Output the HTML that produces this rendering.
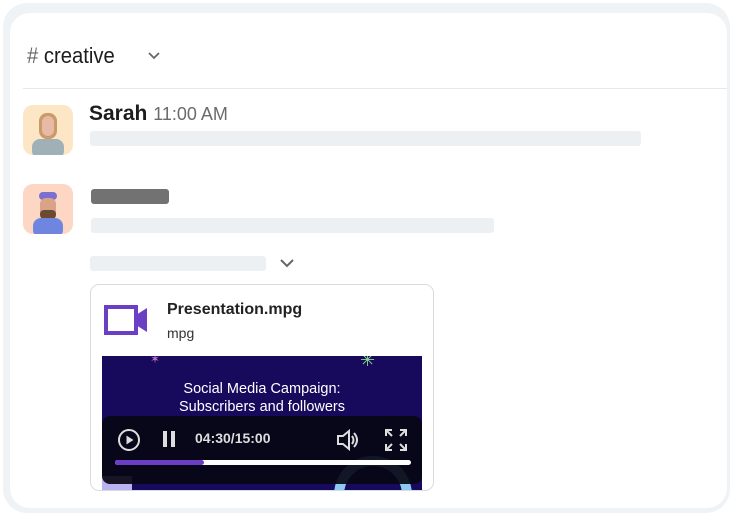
<!DOCTYPE html>
<html><head><style>
*{margin:0;padding:0;box-sizing:border-box}
body{width:732px;height:516px;background:#fff;font-family:"Liberation Sans",sans-serif;position:relative;overflow:hidden}
.outer{position:absolute;left:3px;top:3px;width:727px;height:510px;border-radius:24px;background:#f0f3f6}
.inner{position:absolute;left:10px;top:13px;width:717px;height:495px;border-radius:20px;background:#fff;overflow:hidden}
.bar{position:absolute;background:#edf0f3;border-radius:3px}
</style></head><body>
<div class="outer"></div>
<div class="inner">
 <div style="position:absolute;left:17px;top:30px;font-size:22px;color:#1d1d1d;transform:scaleX(0.92);transform-origin:left"><span style="color:#666">#</span> creative</div>
 <svg style="position:absolute;left:137px;top:38px" width="14" height="10" viewBox="0 0 14 10"><path d="M2 2l5 5 5-5" stroke="#666" stroke-width="1.8" fill="none"/></svg>
 <div style="position:absolute;left:13px;top:75px;width:710px;height:1px;background:#e6e8ea"></div>
</div>
<div style="position:absolute;left:23px;top:105px;width:50px;height:50px;border-radius:10px;background:#fde6c6;overflow:hidden">
 <div style="position:absolute;left:16px;top:8px;width:18px;height:26px;border-radius:8px;background:#c99a6a"></div>
 <div style="position:absolute;left:19px;top:11px;width:12px;height:20px;border-radius:6px;background:#e8b9a4"></div>
 <div style="position:absolute;left:9px;top:34px;width:32px;height:20px;border-radius:8px;background:#9fb0b6"></div>
</div>
<div style="position:absolute;left:23px;top:184px;width:50px;height:50px;border-radius:10px;background:#fdd6c4;overflow:hidden">
 <div style="position:absolute;left:16px;top:8px;width:18px;height:8px;border-radius:5px;background:#7b6fd0"></div>
 <div style="position:absolute;left:17px;top:14px;width:16px;height:20px;border-radius:6px;background:#d9a38a"></div>
 <div style="position:absolute;left:17px;top:26px;width:16px;height:9px;border-radius:4px;background:#6b4a32"></div>
 <div style="position:absolute;left:10px;top:34px;width:30px;height:20px;border-radius:8px;background:#6e86e0"></div>
</div>
<div style="position:absolute;left:89px;top:102px;font-size:21px;font-weight:bold;color:#1d1d1d">Sarah <span style="font-weight:normal;font-size:18px;color:#6b6b6b">11:00 AM</span></div>
<div class="bar" style="left:90px;top:131px;width:551px;height:15px"></div>
<div style="position:absolute;left:91px;top:189px;width:78px;height:15px;background:#727272;border-radius:3px"></div>
<div class="bar" style="left:91px;top:218px;width:403px;height:15px"></div>
<div class="bar" style="left:90px;top:256px;width:176px;height:15px"></div>
<svg style="position:absolute;left:279px;top:258px" width="16" height="11" viewBox="0 0 16 11"><path d="M2 2l6 6 6-6" stroke="#666" stroke-width="2" fill="none"/></svg>
<div style="position:absolute;left:90px;top:284px;width:344px;height:207px;border:1.5px solid #d5dde3;border-radius:9px;background:#fff;overflow:hidden">
 <svg style="position:absolute;left:13px;top:20px" width="46" height="30" viewBox="0 0 46 30"><rect x="2" y="2" width="30" height="26" fill="none" stroke="#6a3fc4" stroke-width="4"/><path d="M32 10l11-7v24l-11-7z" fill="#6a3fc4"/></svg>
 <div style="position:absolute;left:76px;top:16px;font-size:16px;font-weight:bold;color:#222">Presentation.mpg</div>
 <div style="position:absolute;left:76px;top:40px;font-size:14px;color:#333">mpg</div>
 <div style="position:absolute;left:11px;top:71px;width:320px;height:136px;background:#170a5c;overflow:hidden">
  <div style="position:absolute;left:0;top:24px;width:320px;text-align:center;font-size:14.5px;line-height:18px;color:#fff">Social Media Campaign:<br>Subscribers and followers</div>
  <div style="position:absolute;left:48px;top:-4px;font-size:12px;color:#c070c0">✶</div>
  <div style="position:absolute;left:258px;top:-6px;font-size:18px;color:#8cd98c">✳</div>
  <div style="position:absolute;left:232px;top:100px;width:78px;height:78px;border-radius:50%;border:10px solid #8cc8f0"></div>
  <div style="position:absolute;left:0;top:120px;width:30px;height:20px;background:#b9b4f0"></div>
  <div style="position:absolute;left:0;top:60px;width:320px;height:68px;border-radius:8px;background:rgba(8,6,20,.92)"></div>
  <svg style="position:absolute;left:15px;top:72px" width="24" height="24" viewBox="0 0 24 24"><circle cx="12" cy="12" r="10" stroke="#ddd" stroke-width="2" fill="none"/><path d="M9.5 7.5v9l7-4.5z" fill="#ddd"/></svg>
  <div style="position:absolute;left:61px;top:75px;width:4px;height:16px;background:#ddd"></div>
  <div style="position:absolute;left:69px;top:75px;width:4px;height:16px;background:#ddd"></div>
  <div style="position:absolute;left:93px;top:74px;font-size:14px;font-weight:bold;color:#ddd">04:30/15:00</div>
  <svg style="position:absolute;left:234px;top:73px" width="24" height="22" viewBox="0 0 24 22"><path d="M2 7h5l6-5v18l-6-5H2z" fill="none" stroke="#ddd" stroke-width="2"/><path d="M16 7q3 4 0 8M18 4q6 7 0 14" stroke="#ddd" stroke-width="2" fill="none"/></svg>
  <svg style="position:absolute;left:282px;top:72px" width="24" height="24" viewBox="0 0 24 24" stroke="#ddd" stroke-width="2" fill="none"><path d="M2 8V2h6M2 2l6 6M22 8V2h-6M22 2l-6 6M2 16v6h6M2 22l6-6M22 16v6h-6M22 22l-6-6"/></svg>
  <div style="position:absolute;left:13px;top:104px;width:296px;height:5px;border-radius:3px;background:#fff"></div>
  <div style="position:absolute;left:13px;top:104px;width:89px;height:5px;border-radius:3px;background:#6b3fc4"></div>
 </div>
</div>
</body></html>
